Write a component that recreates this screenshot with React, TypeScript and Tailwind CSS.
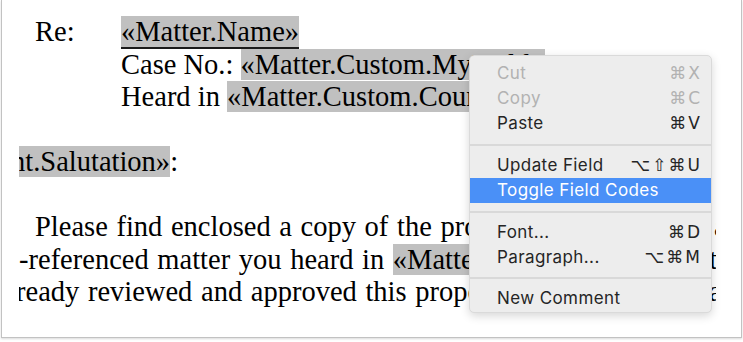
const serif = "font-['Liberation_Serif','Times_New_Roman',serif]"

type MenuItem = { label: string; keys?: string; disabled?: boolean; active?: boolean } | 'sep'

const menu: MenuItem[] = [
  { label: 'Cut', keys: '⌘X', disabled: true },
  { label: 'Copy', keys: '⌘C', disabled: true },
  { label: 'Paste', keys: '⌘V' },
  'sep',
  { label: 'Update Field', keys: '⌥⇧⌘U' },
  { label: 'Toggle Field Codes', active: true },
  'sep',
  { label: 'Font...', keys: '⌘D' },
  { label: 'Paragraph...', keys: '⌥⌘M' },
  'sep',
  { label: 'New Comment' },
]

function Field({ children, underline }: { children: React.ReactNode; underline?: boolean }) {
  return (
    <span className={`bg-[#c0c0c0] ${underline ? 'shadow-[inset_0_-2px_0_#1a1a1a]' : ''}`}>{children}</span>
  )
}

function ContextMenu() {
  return (
    <div className="absolute left-[469px] top-[55px] w-[243px] h-[258px] rounded-[5px] bg-[#ededed] border border-[#dadada] shadow-[0_3px_10px_rgba(0,0,0,0.16)] pt-[5px] font-['Inter','DejaVu_Sans',sans-serif] text-[17px] tracking-[0.4px] overflow-hidden">
      {menu.map((item, i) =>
        item === 'sep' ? (
          <div key={i} className={`${i === 9 ? 'h-[16px]' : 'h-[17px]'} flex items-center`}>
            <div className="h-[2px] w-full bg-[#d9d9d9]" />
          </div>
        ) : (
          <div
            key={i}
            className={`h-[25px] flex items-center justify-between pl-[27px] pr-[11px] ${
              item.active ? 'bg-[#4a90f7] text-white' : item.disabled ? 'text-[#b2b2b2]' : 'text-[#252525]'
            }`}
          >
            <span>{item.label}</span>
            {item.keys && (
              <span className="font-['DejaVu_Sans',sans-serif] text-[17px] tracking-[2px] mr-[-2px]">{item.keys}</span>
            )}
          </div>
        ),
      )}
    </div>
  )
}

export default function App() {
  return (
    <div className="relative w-[743px] h-[342px] bg-white overflow-hidden">
      <div className="ml-[1px] w-[741px] h-[338px] border-l border-r border-b border-[#c2c2c2] shadow-[0_1px_2px_rgba(0,0,0,0.15)] pl-[17px]">
        <div className={`${serif} w-[697px] h-full overflow-hidden pt-[16px] text-[28.5px] leading-[32.5px] text-black whitespace-nowrap`}>
          <div className="flex pl-[16px]">
            <span className="w-[86px]">Re:</span>
            <Field underline>«Matter.Name»</Field>
          </div>
          <div className="pl-[102px]">
            Case No.: <Field>«Matter.Custom.MyField»</Field>
          </div>
          <div className="pl-[102px]">
            Heard in <Field>«Matter.Custom.Court»</Field>
          </div>
          <div className="h-[32.5px]" />
          <div className="ml-[-8px]">
            <Field>nt.Salutation»</Field>:
          </div>
          <div className="h-[32.5px]" />
          <div className="[word-spacing:1.5px]">
            <div className="pl-[16px]">Please find enclosed a copy of the proposed Order for the above</div>
            <div>
              -referenced matter you heard in <Field>«Matter.Custom.Court»</Field> on the date
            </div>
            <div className="ml-[-3px]">ready reviewed and approved this proposed Order and we have</div>
          </div>
        </div>
      </div>
      <ContextMenu />
    </div>
  )
}
